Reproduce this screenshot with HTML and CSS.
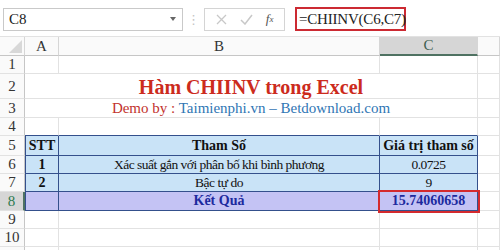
FILE: index.html
```html
<!DOCTYPE html>
<html lang="vi">
<head>
  <meta charset="UTF-8" />
  <meta name="viewport" content="width=device-width, initial-scale=1.0"/>
  <title>Hàm CHIINV trong Excel</title>
  <link rel="stylesheet" href="styles.css">
</head>
<body>

  <!-- Formula bar -->
  <div class="formula-bar">
    <div class="name-box">
      <span>C8</span>
      <span class="arrow"></span>
    </div>
    <div class="dots">⋮</div>
    <div class="fx-buttons">
      <span class="btn">
        <svg width="11" height="11" viewBox="0 0 11 11"><path d="M1 1L10 10M10 1L1 10" stroke="#c8c8c8" stroke-width="1.3" fill="none"/></svg>
      </span>
      <span class="btn">
        <svg width="13" height="11" viewBox="0 0 13 11"><path d="M1 6L5 10L12 1" stroke="#c8c8c8" stroke-width="1.5" fill="none"/></svg>
      </span>
      <span class="btn fx"><i>f</i><sub><i>x</i></sub></span>
    </div>
    <div class="formula">=CHIINV(C6,C7)</div>
  </div>

  <!-- Sheet -->
  <div class="sheet">
    <div class="hd corner"><span class="tri"></span></div>
    <div class="hd col">A</div>
    <div class="hd col">B</div>
    <div class="hd col active-col">C</div>
    <div class="hd col"></div>

    <div class="rh">1</div>
    <div class="c"></div>
    <div class="c"></div>
    <div class="c"></div>
    <div class="c"></div>

    <div class="rh">2</div>
    <div class="c merged title">Hàm CHIINV trong Excel</div>
    <div class="c"></div>

    <div class="rh">3</div>
    <div class="c merged sub"><span><span class="red">Demo by : </span><span class="blue">Taimienphi.vn – Betdownload.com</span></span></div>
    <div class="c"></div>

    <div class="rh">4</div>
    <div class="c above"></div>
    <div class="c above"></div>
    <div class="c above"></div>
    <div class="c"></div>

    <div class="rh">5</div>
    <div class="c t first b">STT</div>
    <div class="c t b">Tham Số</div>
    <div class="c t b">Giá trị tham số</div>
    <div class="c"></div>

    <div class="rh">6</div>
    <div class="c t first b">1</div>
    <div class="c t">Xác suất gắn với phân bố khi bình phương</div>
    <div class="c t">0.0725</div>
    <div class="c"></div>

    <div class="rh">7</div>
    <div class="c t first b">2</div>
    <div class="c t">Bậc tự do</div>
    <div class="c t">9</div>
    <div class="c"></div>

    <div class="rh active-row">8</div>
    <div class="c t res first"></div>
    <div class="c t res b">Kết Quả</div>
    <div class="c t res b picked">15.74060658</div>
    <div class="c"></div>

    <div class="rh">9</div>
    <div class="c"></div>
    <div class="c"></div>
    <div class="c"></div>
    <div class="c"></div>

    <div class="rh">10</div>
    <div class="c"></div>
    <div class="c"></div>
    <div class="c"></div>
    <div class="c"></div>

    <div class="rh"></div>
    <div class="c"></div>
    <div class="c"></div>
    <div class="c"></div>
    <div class="c"></div>
  </div>

</body>
</html>
```

FILE: styles.css
```css
* {
  box-sizing: border-box;
}

body {
  margin: 0;
  width: 500px;
  height: 250px;
  overflow: hidden;
  background: #fff;
  font-family: "Liberation Serif", "Times New Roman", serif;
  color: #111;
}

/* formula bar */
.formula-bar {
  display: flex;
  align-items: center;
  height: 31px;
  padding: 7px 0 0 3px;
}

.name-box {
  width: 180px;
  height: 23px;
  border: 1px solid #c9c9c9;
  display: flex;
  align-items: center;
  justify-content: space-between;
  padding: 0 6px 0 5px;
  font-size: 15px;
  color: #222;
}

.arrow {
  width: 0;
  height: 0;
  border-left: 3px solid transparent;
  border-right: 3px solid transparent;
  border-top: 4px solid #666;
}

.dots {
  width: 21px;
  text-align: center;
  color: #c4c4c4;
  font-size: 13px;
  font-family: "DejaVu Sans", sans-serif;
}

.fx-buttons {
  width: 81px;
  height: 23px;
  border: 1px solid #d4d4d4;
  display: flex;
  align-items: center;
  justify-content: space-around;
  padding: 0 4px;
}

.btn {
  display: flex;
  align-items: center;
}

.fx {
  font-size: 13px;
  color: #555;
}

.fx sub {
  font-size: 9px;
}

.formula {
  margin-left: 10px;
  width: 111px;
  height: 24px;
  border: 2px solid #cc2a32;
  display: flex;
  align-items: center;
  padding-left: 2px;
  font-size: 15px;
  letter-spacing: -0.2px;
  color: #222;
  white-space: nowrap;
}

/* sheet grid */
.sheet {
  margin-top: 5px;
  display: grid;
  grid-template-columns: 25px 34px 321px 98px 22px;
  grid-template-rows: 19px 18px 25px 19px 18px 20px 18px 18px 19px 18px 18px 18px;
  border-top: 1px solid #e2e2e2;
}

.hd {
  background: #fafafa;
  border-right: 1px solid #d6d6d6;
  border-bottom: 1px solid #c6c6c6;
  display: flex;
  align-items: center;
  justify-content: center;
  font-size: 15px;
  color: #333;
}

.corner {
  justify-content: flex-end;
  align-items: flex-end;
  padding: 0 2px 2px 0;
}

.tri {
  width: 0;
  height: 0;
  border-left: 13px solid transparent;
  border-bottom: 13px solid #d8d8d8;
}

.active-col {
  background: #d6d6d6;
  border-bottom: 2px solid #4f7262;
  color: #3f5f52;
}

.rh {
  background: #fafafa;
  border-right: 1px solid #c6c6c6;
  border-bottom: 1px solid #e2e2e2;
  display: flex;
  align-items: center;
  justify-content: center;
  font-size: 15px;
  color: #333;
}

.active-row {
  background: #d6d6d6;
  color: #2d7a4f;
  border-right: 2px solid #4f7262;
}

.c {
  border-right: 1px solid #e2e2e2;
  border-bottom: 1px solid #e2e2e2;
  display: flex;
  align-items: center;
  justify-content: center;
  font-size: 13.5px;
  letter-spacing: -0.5px;
  white-space: nowrap;
}

.merged {
  grid-column: span 3;
}

.title {
  font-size: 20px;
  letter-spacing: 0;
  font-weight: bold;
  color: #cc2b1d;
  padding-top: 2px;
}

.sub {
  font-size: 15px;
  letter-spacing: 0;
}

.red {
  color: #c2322c;
}

.blue {
  color: #2f76b4;
}

/* parameter table */
.above {
  border-bottom-color: #34508c;
}

.t {
  background: #c9e3f7;
  border-right-color: #34508c;
  border-bottom-color: #34508c;
}

.t.first {
  border-left: 1px solid #34508c;
}

.b {
  font-size: 14px;
  letter-spacing: 0;
  font-weight: bold;
}

.res {
  background: #c4c3f4;
  color: #1d2a9e;
}

.picked {
  position: relative;
  z-index: 1;
  outline: 2px solid #d42a2e;
}
```
